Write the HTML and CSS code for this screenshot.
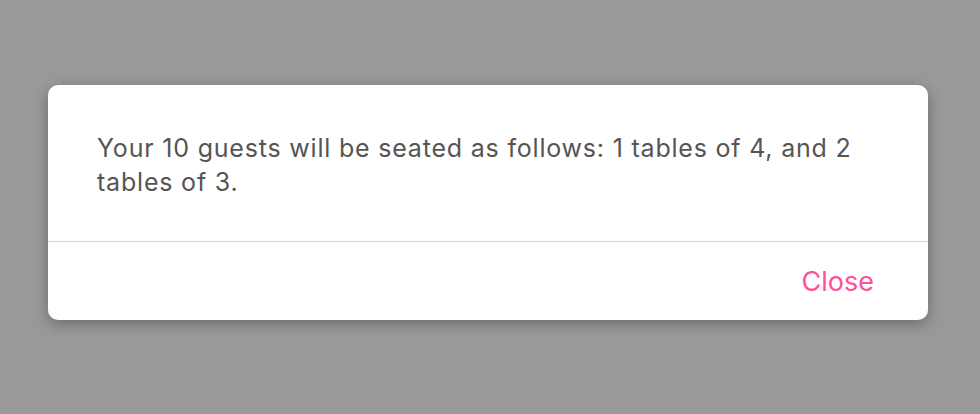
FILE: index.html
```html
<!DOCTYPE html>
<html>
<head>
<meta charset="utf-8">
<link rel="stylesheet" href="styles.css">
</head>
<body>
<div class="overlay">
  <div class="modal">
    <div class="modal-body">
      <p class="message">Your 10 guests will be seated as follows: 1 tables of 4, and 2 tables of 3.</p>
    </div>
    <div class="modal-footer">
      <button class="close-btn">Close</button>
    </div>
  </div>
</div>
</body>
</html>
```
FILE: styles.css
```css
html, body {
  margin: 0;
  padding: 0;
  height: 100%;
}
body {
  background: #999999;
  font-family: Inter, "Liberation Sans", Arial, sans-serif;
}
.overlay {
  padding: 85px 52px 0 48px;
}
.modal {
  background: #ffffff;
  border-radius: 10px;
  box-shadow: 0 4px 14px rgba(0, 0, 0, 0.3);
  overflow: hidden;
}
.modal-body {
  padding: 46px 70px 42px 49px;
  border-bottom: 1px solid #d2d2d2;
}
.message {
  margin: 0;
  font-size: 25px;
  line-height: 34px;
  letter-spacing: 0.8px;
  color: #555555;
}
.modal-footer {
  display: flex;
  justify-content: flex-end;
  height: 78px;
  align-items: center;
  padding-right: 54px;
}
.close-btn {
  background: none;
  border: none;
  padding: 0;
  font-family: inherit;
  font-size: 27px;
  color: #ff4f9b;
  cursor: pointer;
}
```
